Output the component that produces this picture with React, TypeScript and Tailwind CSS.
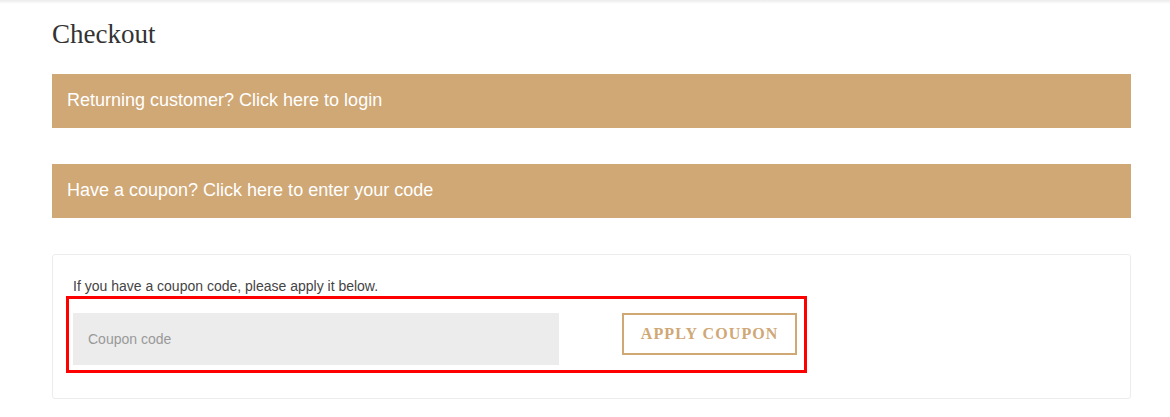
import React from "react";

export default function App() {
  return (
    <div className="w-[1170px] h-[417px] bg-white overflow-hidden" style={{ fontFamily: "'Liberation Sans', Arial, sans-serif" }}>
      <div className="h-[4px] bg-gradient-to-b from-[#ececec] to-white" />
      <div className="pl-[52px] pr-[39px] pt-[14px]">
        <h1 className="text-[27px] leading-[32px] text-[#333] font-normal mb-[24px]" style={{ fontFamily: "'Liberation Serif', 'Times New Roman', serif" }}>
          Checkout
        </h1>
        <div className="h-[54px] bg-[#cfa876] flex items-center px-[15px] pb-[1px] text-white text-[18px] mb-[36px]">
          Returning customer? Click here to login
        </div>
        <div className="h-[54px] bg-[#cfa876] flex items-center px-[15px] pb-[1px] text-white text-[18px] mb-[36px]">
          Have a coupon? Click here to enter your code
        </div>
        <div className="border border-[#ececec] rounded-[3px] px-[20px] pt-[21px] pb-[33px]">
          <p className="text-[14px] leading-[20px] text-[#444] mb-[17px]">If you have a coupon code, please apply it below.</p>
          <div className="relative flex items-start w-[724px]">
            <div className="absolute left-[-7px] top-[-17px] w-[741px] h-[77px] border-[3px] border-[#ff0000] pointer-events-none" />
            <input
              className="w-[487px] h-[52px] bg-[#ececec] px-[15px] text-[14px] text-[#555] placeholder:text-[#999] outline-none"
              placeholder="Coupon code"
            />
            <button
              className="ml-[63px] w-[175px] h-[42px] border-2 border-[#cfa876] text-[#cfa876] text-[16px] font-bold tracking-[1.1px] flex items-center justify-center"
              style={{ fontFamily: "'Liberation Serif', 'Times New Roman', serif" }}
            >
              APPLY COUPON
            </button>
          </div>
        </div>
      </div>
    </div>
  );
}
